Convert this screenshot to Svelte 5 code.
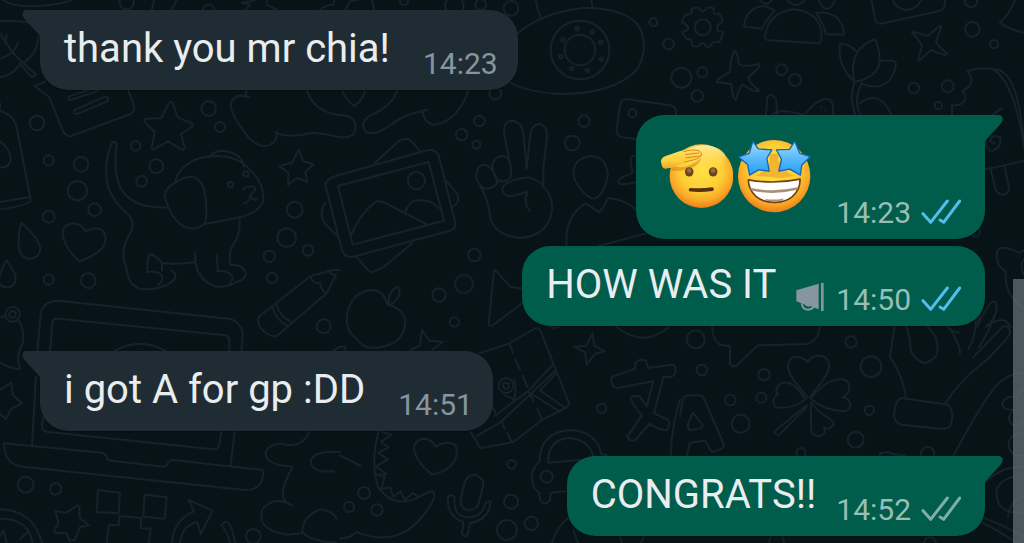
<script>
  const messages = [
    { id: 1, out: false, tail: true, text: 'thank you mr chia!', time: '14:23' },
    { id: 2, out: true, tail: true, emoji: true, time: '14:23', read: true },
    { id: 3, out: true, tail: false, text: 'HOW WAS IT', time: '14:50', read: true, broadcast: true },
    { id: 4, out: false, tail: true, text: 'i got A for gp :DD', time: '14:51' },
    { id: 5, out: true, tail: true, text: 'CONGRATS!!', time: '14:52', read: false }
  ];

  // small bubbles scattered over the wallpaper: x, y, radius
  const dots = [
    [380, 6, 22], [626, 32, 18], [111, 369, 22], [146, 481, 15], [243, 493, 22], [232, 572, 29],
    [284, 629, 19], [146, 650, 18], [407, 438, 14], [469, 499, 21], [425, 544, 16], [626, 326, 22],
    [660, 381, 15], [884, 629, 24], [860, 713, 28], [808, 769, 17], [924, 751, 16], [691, 554, 8],
    [738, 522, 8], [146, 839, 15], [265, 842, 22], [38, 943, 22], [38, 943, 10], [816, 834, 16],
    [971, 979, 21], [77, 1454, 24], [167, 1467, 17], [760, 1609, 22],
    [1212, 4, 12], [1363, 18, 28], [1442, 14, 16], [1533, 25, 22], [1960, 67, 12], [2006, 132, 16],
    [2044, 233, 30], [2107, 217, 15], [2092, 288, 17], [1740, 150, 88], [1740, 150, 46], [1486, 280, 18],
    [1438, 363, 16], [1385, 404, 17], [1429, 434, 12], [1752, 363, 17], [1717, 429, 22], [1897, 340, 12],
    [1249, 542, 26], [1423, 765, 19], [1317, 885, 20], [1392, 852, 27], [1363, 966, 14], [1518, 1157, 22],
    [1518, 1157, 9], [1805, 1225, 14], [1535, 1393, 13], [1533, 1505, 21], [1594, 1570, 20],
    [1521, 1590, 30], [1092, 1479, 18], [1047, 1521, 15], [1131, 1530, 17],
    [2108, 82, 24], [2345, 209, 16], [2385, 240, 18], [2741, 264, 16], [2843, 259, 18], [2815, 317, 11],
    [2913, 4, 18], [2917, 88, 22], [2982, 133, 12], [2087, 1018, 27], [2106, 1110, 16], [2292, 1124, 17],
    [2191, 1200, 16], [2284, 1193, 15], [2222, 1271, 27], [2403, 1358, 14], [2553, 1026, 17], [2613, 1100, 31],
    [2608, 1231, 14], [2567, 1319, 24], [2783, 1361, 20], [2926, 696, 14], [3060, 1334, 34],
    [2330, 1624, 22], [2790, 1630, 18],
    [1731, 86, 5], [1777, 96, 5], [1803, 127, 5], [1804, 178, 5], [1762, 211, 5], [1715, 205, 5], [1682, 170, 5], [1689, 120, 5]
  ];

  // line drawings, grouped by the patch of wallpaper they belong to
  const patches = [
    {
      x: 0,
      y: 0,
      paths: [
        'M10 0Q40 22 110 18T215 0M0 63Q40 60 90 68M455 30L462 0M515 30L530 0M735 30L750 14L725 8Q750 6 764 0M800 0V14L830 28M960 30Q975 14 1000 14L1004 0',
        'M0 100L38 158L108 224Q98 236 88 224L60 190M38 158L54 128M38 158L4 176M16 130L20 104M0 232Q40 226 62 190M74 186Q112 160 116 110',
        'M136 245L104 258L148 292L186 386Q196 412 214 408L392 342Q406 334 402 318L384 270M206 290L290 262M206 290Q202 302 216 299L296 272M224 330L314 290Q330 290 322 304L232 342Q216 342 224 330',
        'M0 310V332Q42 344 50 382L92 600Q90 616 0 628M0 606L84 592M0 424Q34 450 32 482Q24 506 0 502',
        'M511 306Q516 304 520 314L533 352L574 370Q582 376 574 381L543 402L554 442Q554 452 544 448L504 424L464 447Q454 450 456 440L464 396L435 366Q430 358 440 356L484 354L505 312Q508 306 511 306Z',
        'M896 450L910 484L941 493L916 516L922 546L892 534L864 554L866 520L838 498L876 488Z',
        'M503 622Q410 626 374 580Q336 542 350 432Q342 416 332 436Q310 500 324 560Q338 602 378 638Q404 656 396 690Q362 744 372 780L382 812',
        'M526 542Q540 494 600 474Q700 452 750 510Q792 548 790 600Q784 634 720 652L616 672M494 588Q494 562 540 540Q590 512 612 566Q624 620 616 668Q590 696 552 680Q510 654 494 588ZM630 468Q646 450 680 454Q726 464 732 500M730 570Q732 560 746 562Q766 554 766 568L750 588Q748 606 732 610M750 588Q758 602 770 598',
        'M718 652Q724 700 700 734Q684 756 692 796Q722 790 734 812M442 812Q442 760 454 762Q480 776 486 790Q540 794 586 786V758M586 786L592 812M650 766L654 812M486 790V812',
        'M64 668Q54 700 56 736Q60 780 96 776Q124 768 120 740Q110 708 64 668ZM238 784Q188 738 188 696Q194 670 222 670Q246 674 256 694Q286 678 306 690Q324 708 312 736Q296 764 238 784ZM20 780Q-4 820 -4 850Q12 868 36 858Q52 846 44 820Z',
        'M736 290Q704 280 692 312Q690 340 744 410Q776 446 806 436Q836 424 828 396Q850 416 940 398Q980 402 1022 412M736 290L748 290M736 290L740 270M920 270Q940 336 1022 346'
      ]
    },
    {
      x: 1020,
      y: 0,
      paths: [
        'M16 30L30 4L52 0M96 0L102 30M588 0Q590 30 606 56M754 0L758 24',
        'M526 106Q600 38 730 24Q860 22 900 84Q928 150 890 210Q820 282 660 282Q560 276 506 246',
        'M6 270Q20 306 44 318Q70 298 76 270M0 346Q48 346 46 384Q44 416 0 412M172 270Q160 316 88 348Q56 372 78 396Q110 408 156 372Q190 342 262 330M248 330Q250 366 278 374Q350 370 386 270',
        'M0 524L264 450Q290 446 298 474L346 670Q348 686 330 692L40 770Q14 774 6 750L-44 556Q-46 536 0 524ZM-6 558L266 486L312 662L38 734ZM32 708Q60 640 106 606Q122 600 142 612L262 674M196 636Q210 592 250 602Q270 600 296 624M104 490L176 424Q200 408 218 428L242 456M318 542L346 574Q362 594 350 610L340 620M48 770L92 818L130 802L216 730M-46 610Q-64 640 -46 670L-10 706',
        'M514 510L492 398Q490 362 518 362Q546 366 550 400L560 506L570 410Q574 370 602 372Q626 382 620 420L610 506V560Q640 590 636 630Q626 708 540 714Q464 706 450 650Q448 606 422 560M412 510Q420 490 440 496Q462 504 472 548Q456 572 430 564Q400 540 412 510ZM458 488Q474 462 500 470Q516 490 512 530Q496 552 474 540Q454 520 458 488ZM486 566Q496 540 566 532Q596 542 610 556M486 566Q490 590 516 588L562 576Q548 608 570 632',
        'M750 468Q796 468 804 520Q796 582 764 596Q738 596 704 540Q688 480 750 468ZM680 738Q672 648 738 610L776 636Q788 630 804 594Q850 596 890 630M776 738L920 700',
        'M890 418L846 412Q828 406 830 390L840 312Q846 296 862 298L992 316Q1010 320 1008 346M884 468Q870 468 872 484L878 518L846 532Q828 542 838 552Q870 554 890 544'
      ]
    },
    {
      x: 2040,
      y: 0,
      paths: [
        'M58 24Q68 44 80 24Q92 20 102 26Q96 48 116 40Q124 48 128 66Q108 74 112 92L130 96Q128 112 116 128Q96 120 92 138Q84 144 78 138Q68 120 58 138Q44 142 34 134Q40 114 22 118Q10 108 6 96L24 90Q28 74 6 68Q8 52 20 42Q40 46 34 28Q44 20 58 24Z',
        'M44 82A24 24 0 1 0 92 82A24 24 0 1 0 44 82',
        'M164 152Q172 154 176 190Q188 204 238 192Q242 204 204 232Q210 252 238 272Q226 280 188 254Q178 260 168 300Q158 298 154 252L110 246Q110 236 150 216Q152 170 164 152Z',
        'M240 0Q258 24 276 0M322 0Q346 30 374 0M416 0Q440 54 466 0M192 76Q200 24 250 18Q278 24 284 34Q260 56 246 86L194 80ZM254 114Q262 40 338 28Q410 34 424 90V118Q424 130 410 130L262 120ZM408 38Q440 34 468 50Q492 74 492 104L438 102Q430 70 408 38Z',
        'M258 344L262 292Q270 276 288 296L292 344M278 342Q300 324 370 344M376 340Q420 290 446 298Q464 306 458 344M424 320V322M436 330V332',
        'M524 246Q470 196 480 130Q510 134 532 156Q510 200 524 246ZM532 156Q556 126 586 118Q610 180 590 210Q576 234 524 246M598 184Q640 176 648 190Q644 230 620 248Q590 270 544 250M526 344Q506 290 524 246M540 344Q520 300 544 250M540 310Q600 266 634 344',
        'M574 0L586 60Q590 74 610 70L774 34Q800 28 794 0M638 0Q650 28 680 30Q710 28 724 0',
        'M784 80L768 126Q778 142 800 160L796 166L752 150L718 182L714 178L726 138Q712 112 696 98L702 96L744 108L778 78ZM1006 0Q990 40 960 68Q990 90 1032 98'
      ]
    },
    {
      x: 2712,
      y: 180,
      paths: [
        'M144 166V136Q184 138 184 108L176 92Q220 70 190 34Q230 18 284 30Q350 50 364 300M264 26Q330 60 360 260M294 144L264 166M244 236Q246 276 266 272Q294 262 288 232Q262 222 258 244L272 250M244 328Q300 318 360 302M260 328L274 388Q286 410 306 402Q320 390 312 370L302 320',
        'M306 634Q276 620 278 580Q284 548 344 578L364 570M306 634Q296 700 360 746M358 600Q346 620 360 644M206 740Q240 712 220 800Q270 690 278 740Q276 780 246 800Q300 760 320 800'
      ]
    },
    {
      x: 0,
      y: 810,
      paths: [
        'M380 0Q386 46 420 56Q460 62 490 48Q530 36 526 10L514 0M440 6Q480 2 486 18Q490 36 474 44M592 0Q610 40 650 50Q690 50 704 38Q736 30 738 10L732 0M650 2Q690 2 698 20Q698 34 688 42',
        'M112 242L122 130Q130 92 176 92L686 146Q726 156 728 194L724 242M150 242L158 156Q160 144 176 146L676 196Q688 198 688 212V242M344 242Q420 200 496 242',
        'M108 320L96 524M130 440L126 470Q126 484 146 486L640 538Q656 538 658 524L664 484M704 484L692 586M12 520L306 548Q318 550 320 562Q322 572 334 572L490 590Q500 590 504 580Q508 570 520 570L790 600Q792 660 736 660L68 590Q14 586 12 520Z',
        'M0 142L18 138M56 152Q74 178 68 220Q46 256 60 296Q40 300 0 278M0 360L34 338L38 374L66 400L34 416L18 446L0 432',
        'M776 140L932 18L1000 0L1020 0M776 140Q770 160 786 178Q810 202 830 198L980 70L1008 14M932 18Q936 44 960 38Q962 60 980 70M816 108Q826 150 866 170M828 98Q836 140 878 158M984 0Q988 12 1004 14M1000 242L1020 230',
        'M232 706Q240 706 238 730L240 744L266 766L240 772L224 810L208 812L200 790L164 788L162 780L176 760L166 724L200 728ZM294 660L360 668L356 730L290 726ZM434 674L500 682L494 746L430 740ZM320 819L326 764L356 766L358 738L424 744L422 774L452 776L446 819',
        'M0 718Q100 720 126 819M0 746Q84 744 98 819M60 806L82 788M0 800L10 780L20 819M516 819Q520 750 582 724L566 690L638 722L602 792L592 756Q546 766 540 819M664 766Q680 740 696 780L706 819M690 819Q682 784 664 766',
        'M928 484Q910 530 860 524Q820 514 800 540Q786 570 840 586L878 590Q850 640 848 670Q850 700 876 706Q820 674 786 720Q770 780 860 794L906 790Q906 740 960 718Q1000 724 1010 746M906 782Q920 812 1010 819M1020 546Q940 540 932 574Q934 610 1002 604'
      ]
    },
    {
      x: 1020,
      y: 810,
      paths: [
        'M462 0L446 160Q446 170 458 166L546 100M466 0L510 50Q530 56 548 54',
        'M50 206Q10 180 24 120Q44 60 100 60Q136 66 142 104Q186 112 196 150Q196 220 120 232Q70 240 50 206ZM148 106Q140 66 174 50Q190 80 148 106M0 230L14 230L18 242',
        'M212 240L240 226L246 180L268 212L308 216L276 240M418 250L508 220L584 176Q596 172 602 184L686 396Q688 408 676 414L606 450L520 516L424 534Q416 530 412 520L392 486M508 220L520 250M526 268L540 300M548 318L562 350M566 366L580 392M592 416L604 446M484 452L494 476M502 490L516 516M410 498L480 458L648 300L640 282L566 362L464 438M576 372L660 426M600 362L676 414M600 362L648 310M460 414L470 436M494 376L524 388Q530 340 522 330',
        'M758 190L762 226L794 244L764 252L740 284L736 248L702 230L738 228ZM826 168Q910 238 990 168M626 168Q640 180 660 168',
        'M886 296V278Q900 264 918 272L924 294L994 284Q1008 284 1006 302Q1006 318 990 320L970 322L942 430L984 450Q994 460 980 480Q970 484 928 462L886 510Q868 516 862 500L906 436Q880 410 872 384Q880 374 900 380L920 410L940 334L834 354Q816 354 814 330Q812 318 830 316ZM1020 390Q996 460 992 556',
        'M598 576Q600 486 690 480Q770 484 784 552L800 556M624 578Q624 506 690 504Q750 510 762 566ZM598 576Q572 596 576 630Q580 660 598 668L600 690Q616 712 630 690L632 668L676 664M602 620A18 18 0 1 0 638 620A18 18 0 1 0 602 620',
        'M116 484Q90 580 114 650Q160 720 240 680L268 664Q290 664 280 690Q200 840 60 790L52 786L30 800L0 806M122 484L154 494L122 516L146 532L114 548L144 568L108 590L140 612L108 614L134 620L124 656L150 652L160 680L182 664L194 690L218 670L236 680M0 556L62 588',
        'M276 614Q222 570 222 530Q228 506 256 506Q276 510 288 530Q320 510 344 524Q360 548 336 584Q320 604 276 614ZM372 646Q380 612 404 614Q432 622 430 646L414 706Q400 724 380 720Q358 710 362 688ZM324 682Q334 670 344 682Q338 740 384 742Q424 742 434 706Q440 688 452 698Q446 750 390 760L382 796Q370 804 366 790L370 756Q320 740 324 682ZM636 819Q650 770 684 744M700 780L714 819M840 800L846 819M912 800L902 819'
      ]
    },
    {
      x: 2040,
      y: 930,
      paths: [
        'M96 48Q100 104 130 106L150 108V160Q154 172 168 168L234 106L380 102Q420 90 418 48',
        'M384 264C350 220 316 190 326 156C338 130 366 140 384 156C400 130 440 130 448 164C446 200 410 230 390 262M376 268C356 240 340 214 310 218C286 224 286 244 294 254C276 262 276 284 290 292C320 296 350 290 376 268M394 264C420 230 450 206 486 208C514 212 516 244 488 262C514 266 516 292 500 302C460 306 420 290 394 268M392 278L394 364C402 382 426 382 434 368L432 352C446 360 462 350 460 338C450 320 410 310 396 278M380 286L284 364Q286 378 298 374L380 292',
        'M0 320L8 270Q14 256 30 256H56Q68 256 74 270L132 404Q134 414 120 418L100 426Q92 426 88 414L76 392L30 398L20 440M38 308L68 344Q68 352 58 356L30 360Q22 356 24 344Z',
        'M644 48L630 140Q670 200 678 264M678 48Q690 70 692 122Q710 156 738 160L766 142Q780 110 766 80L742 48M664 264L804 284Q826 310 810 350Q800 358 780 356L664 344Q636 334 644 300Q648 268 664 264ZM796 280Q840 210 920 150Q980 90 990 70Q990 44 968 50L880 142M804 48Q840 100 840 130M816 62L836 68M884 0Q896 60 866 116M950 0Q930 60 896 114M820 438Q920 250 960 216Q1000 184 1030 190',
        'M1032 240Q1016 240 1014 264Q984 250 966 280Q970 300 998 300Q976 330 998 344Q1020 348 1032 330M912 520Q970 464 1032 472M1000 500Q930 520 956 580Q970 610 1032 610M1032 560Q990 570 984 620M900 620Q960 640 1032 680M900 634Q960 664 1010 699M600 438L600 430L626 426Q634 434 660 434L676 438'
      ]
    }
  ];
</script>

<main class="chat">
  <svg class="wallpaper" viewBox="0 0 3072 1629" preserveAspectRatio="xMidYMin slice" aria-hidden="true">
    {#each patches as patch}
      <g transform="translate({patch.x} {patch.y})">
        {#each patch.paths as d}
          <path {d} />
        {/each}
      </g>
    {/each}
    {#each dots as [cx, cy, r]}
      {#if cx !== 2108}
        <circle {cx} {cy} {r} />
      {/if}
    {/each}
  </svg>

  <ul class="messages">
    {#each messages as msg (msg.id)}
      <li class="bubble" class:out={msg.out} class:tail={msg.tail}>
        {#if msg.tail}
          <svg class="corner" viewBox="0 0 19 26" aria-hidden="true">
            <path d="M19 0H5Q0 0 .4 5Q.7 7 3 9.500L18 26H19Z" />
          </svg>
        {/if}

        {#if msg.emoji}
          <div class="emojis">
            <svg viewBox="33 30 220 220" role="img" aria-label="saluting face">
              <defs>
                <radialGradient id="skin" cx=".5" cy=".4" r=".6">
                  <stop offset="0" stop-color="#ffe046" />
                  <stop offset=".55" stop-color="#fdce35" />
                  <stop offset=".82" stop-color="#f9a827" />
                  <stop offset="1" stop-color="#ec7d18" />
                </radialGradient>
                <linearGradient id="shine" x1="0" y1="0" x2="0" y2="1">
                  <stop offset="0" stop-color="#fff3b8" stop-opacity=".8" />
                  <stop offset="1" stop-color="#ffe24a" stop-opacity="0" />
                </linearGradient>
                <linearGradient id="hand" x1="0" y1="0" x2="0" y2="1">
                  <stop offset="0" stop-color="#ffe15c" />
                  <stop offset=".6" stop-color="#fdcf3c" />
                  <stop offset="1" stop-color="#f0a42a" />
                </linearGradient>
              </defs>
              <circle cx="158" cy="139" r="96" fill="url(#skin)" />
              <ellipse cx="165" cy="84" rx="66" ry="38" fill="url(#shine)" />
              <path d="M72 108Q110 122 158 84Q150 112 108 120Q84 126 66 122Z" fill="#d97818" opacity=".5" />
              <ellipse cx="121" cy="126" rx="13" ry="14" fill="#6b4519" />
              <ellipse cx="193" cy="126" rx="13" ry="14" fill="#6b4519" />
              <circle cx="121" cy="122" r="7" fill="#957047" />
              <circle cx="193" cy="122" r="7" fill="#957047" />
              <path d="M125 180Q158 183 190 178" fill="none" stroke="#5b2f0c" stroke-width="11" stroke-linecap="round" />
              <path d="M36 94Q36 84 50 78L94 63Q126 54 148 61Q160 67 158 76Q156 84 138 89L98 99L76 112L48 117Q38 116 36 94Z" fill="url(#hand)" />
              <path d="M104 65Q130 57 150 62Q160 67 158 76Q154 85 138 89L106 97M110 74L150 69M110 84L154 78" fill="none" stroke="#d98426" stroke-width="3" stroke-linecap="round" />
            </svg>
            <svg viewBox="268 30 220 220" role="img" aria-label="star-struck">
              <defs>
                <linearGradient id="star" x1="0" y1="0" x2="0" y2="1">
                  <stop offset="0" stop-color="#a2dcff" />
                  <stop offset=".5" stop-color="#5bbafc" />
                  <stop offset="1" stop-color="#239cf4" />
                </linearGradient>
              </defs>
              <circle cx="377" cy="139" r="109" fill="url(#skin)" />
              <path d="M318 138Q356 126 364 94V72L388 72Q388 120 438 138Q400 148 376 142Z" fill="#e88d1d" opacity=".5" />
              <path d="M299 150Q377 164 455 148Q456 180 430 202Q410 218 377 218Q344 218 322 200Q300 180 299 150Z" fill="#fff" stroke="#70400e" stroke-width="5" stroke-linejoin="round" />
              <path d="M304 174Q377 190 451 172L446 180Q377 198 309 182ZM350 208Q377 212 406 206L402 212Q377 218 354 213Z" fill="#aa9078" />
              <path d="M313 34L329 57L370 60L355 85L362 124L330 120L303 136L297 104L270 81L302 70Z" fill="url(#star)" stroke="#1766ac" stroke-width="4" stroke-linejoin="round" />
              <path d="M439 34L454 70L486 80L460 106L456 136L424 118L391 124L399 88L384 60L423 58Z" fill="url(#star)" stroke="#1766ac" stroke-width="4" stroke-linejoin="round" />
            </svg>
          </div>
        {:else}
          <p class="text">{msg.text}</p>
        {/if}

        <div class="meta">
          {#if msg.broadcast}
            <svg class="megaphone" viewBox="42 278 84 90" role="img" aria-label="Broadcast">
              <path d="M43 303L110 283V360L84 350Q78 356 66 345L43 336Z" fill="#8696a0" />
              <path d="M59 342Q62 361 78 361Q92 360 95 352" fill="none" stroke="#8696a0" stroke-width="6" />
              <path d="M117 281H125V365H117Z" fill="#8696a0" />
            </svg>
          {/if}
          <time>{msg.time}</time>
          {#if msg.out}
            <svg class="ticks" class:read={msg.read} viewBox="0 0 120 75" role="img" aria-label={msg.read ? 'Read' : 'Delivered'}>
              <path d="M6 44L29 70L79 6M57 63L68 70L116 6" />
            </svg>
          {/if}
        </div>
      </li>
    {/each}
  </ul>

  <div class="scrollbar"></div>
</main>

<style>
  :global(body) {
    margin: 0;
    background: #081318;
  }

  .chat {
    position: relative;
    min-height: 100vh;
    overflow: hidden;
    background: #081318;
    font-family: Roboto, 'Liberation Sans', sans-serif;
  }

  .wallpaper {
    position: absolute;
    inset: 0;
    width: 100%;
    height: 100%;
    fill: none;
    stroke: #162229;
    stroke-width: 6;
    stroke-linecap: round;
    stroke-linejoin: round;
  }

  .messages {
    position: relative;
    display: flex;
    flex-direction: column;
    gap: 25px;
    margin: 0;
    padding: 10px 39px 7px 40px;
    list-style: none;
  }

  .bubble {
    position: relative;
    display: flex;
    align-items: flex-end;
    align-self: flex-start;
    gap: 33px;
    box-sizing: border-box;
    max-width: 80%;
    padding: 15px 20px 8px 24px;
    border-radius: 28px;
    background: #202c33;
    color: #e9edef;
    box-shadow: 0 1px 1px rgba(0, 0, 0, 0.3);
  }

  .bubble.tail {
    border-top-left-radius: 0;
  }

  .bubble.out {
    align-self: flex-end;
    gap: 20px;
    padding-right: 24px;
    background: #005c4b;
  }

  .bubble.out.tail {
    border-radius: 28px 0 28px 28px;
  }

  /* follow-up from the same sender sits closer */
  .bubble.out:not(.tail) {
    margin-top: -18px;
  }

  .corner {
    position: absolute;
    top: 0;
    left: -18px;
    width: 19px;
    height: 26px;
    fill: #202c33;
  }

  .out .corner {
    left: auto;
    right: -18px;
    fill: #005c4b;
    transform: scaleX(-1);
  }

  .text {
    margin: 0 0 9px;
    font-size: 40px;
    line-height: 48px;
  }

  .emojis {
    display: flex;
    gap: 5px;
    padding: 10px 5px 18px 0;
  }

  .emojis svg {
    width: 73px;
    height: 73px;
  }

  .meta {
    display: flex;
    align-items: flex-end;
    color: #8696a0;
    font-size: 30px;
    line-height: 36px;
  }

  .out .meta {
    color: #99beb7;
  }

  .megaphone {
    width: 28px;
    height: 30px;
    margin: 0 12px 6px 0;
  }

  .ticks {
    width: 40px;
    height: 25px;
    margin: 0 0 7px 10px;
    fill: none;
    stroke: #80aea5;
    stroke-width: 9;
    stroke-linecap: round;
    stroke-linejoin: round;
  }

  .ticks.read {
    stroke: #53bdeb;
  }

  .scrollbar {
    position: absolute;
    right: 0;
    bottom: 0;
    width: 11px;
    height: 264px;
    background: rgba(106, 120, 127, 0.68);
  }
</style>
